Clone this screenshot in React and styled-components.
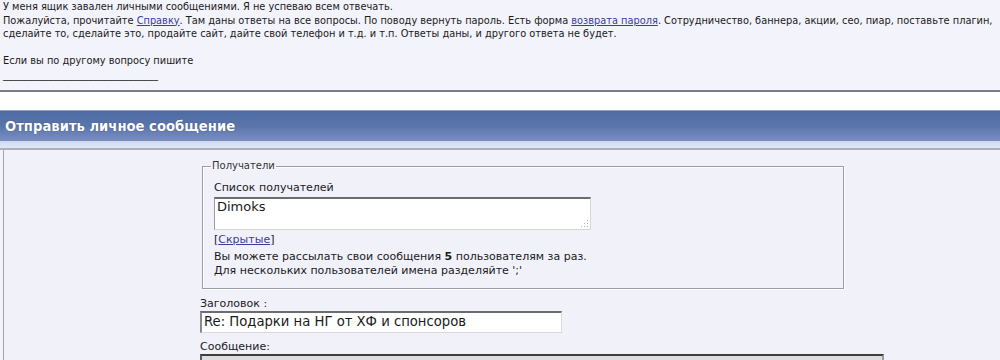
import React from "react";
import styled, { createGlobalStyle } from "styled-components";

const Global = createGlobalStyle`
  html, body { margin: 0; padding: 0; background: #f3f3fb; }
  body { font-family: "DejaVu Sans", Verdana, sans-serif; color: #1a1a1a; }
`;

const Notice = styled.div`
  font-size: 9.8px;
  line-height: 13.5px;
  padding: 0 3px 9px;
  white-space: nowrap;
  border-bottom: 2px solid #7c7c84;
`;

const Rule = styled.span`
  font-size: 10px;
`;

const Link = styled.a`
  color: #3c3c9a;
  text-decoration: underline;
`;

const Spacer = styled.div`
  height: 18px;
  background: #ffffff;
`;

const TitleBar = styled.div`
  height: 30px;
  border-top: 1px solid #8fa0c6;
  background: linear-gradient(to bottom, #4f6ba4 0%, #5a75ab 50%, #7b8ec2 100%);
  display: flex;
  align-items: center;
  padding-left: 5px;
  color: #ffffff;
  font-weight: bold;
  font-size: 13.2px;
  text-shadow: 0 0 1px #2a3c66;
`;

const Band = styled.div`
  height: 7px;
  background: linear-gradient(to bottom, #cfd9ef, #e2e7f3);
  border-bottom: 2px solid #b0b0bc;
`;

const Panel = styled.div`
  margin-left: 3px;
  border-left: 1px solid #a4a4ac;
  background: #f1f1fa;
  padding: 9px 0 0 196px;
  min-height: 220px;
`;

const Fieldset = styled.fieldset`
  box-sizing: border-box;
  width: 642px;
  margin: 0 0 0 2px;
  padding: 8px 10px 10px 11px;
  border: 1px solid #9c9ca4;
  box-shadow: 1px 1px 0 #ffffff, inset 1px 1px 0 #ffffff;
  font-size: 11px;
  line-height: 14px;
`;

const Legend = styled.legend`
  padding: 0 1px;
  margin-left: -3px;
  color: #333;
  font-size: 10px;
  line-height: 14px;
`;

const Label = styled.div`
  font-size: 11px;
  line-height: 14px;
  color: #1a1a1a;
  margin-top: ${(p) => p.$mt || 0}px;
`;

const Recipients = styled.div`
  box-sizing: border-box;
  width: 377px;
  height: 33px;
  margin: 2px 0 0 0;
  background: #ffffff;
  border-top: 2px solid #6c6c6c;
  border-left: 1px solid #9a9a9a;
  border-right: 1px solid #d6d6d6;
  border-bottom: 1px solid #d6d6d6;
  font-size: 13px;
  line-height: 16px;
  padding: 0 2px;
  position: relative;
`;

const Grip = styled.svg`
  position: absolute;
  right: 1px;
  bottom: 1px;
`;

const Hint = styled.div`
  margin-top: ${(p) => p.$mt || 0}px;
`;

const TextInput = styled.div`
  box-sizing: border-box;
  width: 362px;
  height: 22px;
  background: #ffffff;
  border-top: 2px solid #6c6c6c;
  border-left: 2px solid #8a8a8a;
  border-right: 1px solid #dadada;
  border-bottom: 1px solid #dadada;
  font-size: 13.2px;
  line-height: 18px;
  padding: 0 2px;
  white-space: nowrap;
`;

const MessageBox = styled.div`
  box-sizing: border-box;
  width: 684px;
  height: 40px;
  background: #dcdcdc;
  border-top: 2px solid #3c3c3c;
  border-left: 2px solid #5c5c5c;
  border-right: 2px solid #9a9a9a;
`;

export default function App() {
  return (
    <>
      <Global />
      <Notice>
        У меня ящик завален личными сообщениями. Я не успеваю всем отвечать.
        <br />
        Пожалуйста, прочитайте <Link href="#">Справку</Link>. Там даны ответы на все вопросы. По поводу вернуть пароль. Есть форма{" "}
        <Link href="#">возврата пароля</Link>. Сотрудничество, баннера, акции, сео, пиар, поставьте плагин,
        <br />
        сделайте то, сделайте это, продайте сайт, дайте свой телефон и т.д. и т.п. Ответы даны, и другого ответа не будет.
        <br />
        <br />
        Если вы по другому вопросу пишите
        <br />
        <Rule>_______________________________</Rule>
      </Notice>
      <Spacer />
      <TitleBar>Отправить личное сообщение</TitleBar>
      <Band />
      <Panel>
        <Fieldset>
          <Legend>Получатели</Legend>
          <Label>Список получателей</Label>
          <Recipients>
            Dimoks
            <Grip width="8" height="8" viewBox="0 0 8 8">
              <g fill="#b8b8b8">
                <rect x="6" y="0" width="1" height="1" />
                <rect x="3" y="3" width="1" height="1" />
                <rect x="6" y="3" width="1" height="1" />
                <rect x="0" y="6" width="1" height="1" />
                <rect x="3" y="6" width="1" height="1" />
                <rect x="6" y="6" width="1" height="1" />
              </g>
            </Grip>
          </Recipients>
          <Hint $mt={3}>
            [<Link href="#">Скрытые</Link>]
          </Hint>
          <Hint $mt={3}>
            Вы можете рассылать свои сообщения <b>5</b> пользователям за раз.
            <br />
            Для нескольких пользователей имена разделяйте ';'
          </Hint>
        </Fieldset>
        <Label $mt={8}>Заголовок :</Label>
        <TextInput>Re: Подарки на НГ от ХФ и спонсоров</TextInput>
        <Label $mt={7}>Сообщение:</Label>
        <MessageBox />
      </Panel>
    </>
  );
}
